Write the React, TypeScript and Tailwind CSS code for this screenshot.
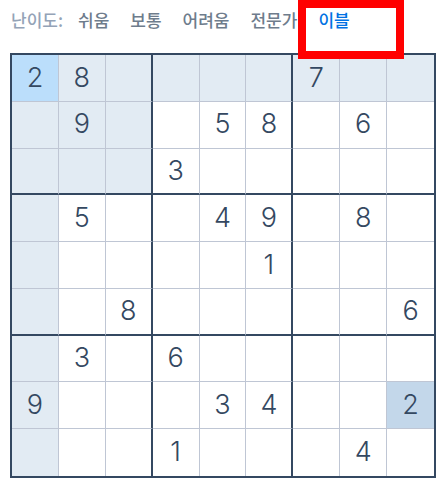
import { Fragment } from "react";

const puzzle: number[][] = [
  [2, 8, 0, 0, 0, 0, 7, 0, 0],
  [0, 9, 0, 0, 5, 8, 0, 6, 0],
  [0, 0, 0, 3, 0, 0, 0, 0, 0],
  [0, 5, 0, 0, 4, 9, 0, 8, 0],
  [0, 0, 0, 0, 0, 1, 0, 0, 0],
  [0, 0, 8, 0, 0, 0, 0, 0, 6],
  [0, 3, 0, 6, 0, 0, 0, 0, 0],
  [9, 0, 0, 0, 3, 4, 0, 0, 2],
  [0, 0, 0, 1, 0, 0, 0, 4, 0],
];

const levels = ["쉬움", "보통", "어려움", "전문가", "이블"];
const selected = { row: 0, col: 0 };

function cellBg(r: number, c: number) {
  if (r === selected.row && c === selected.col) return "bg-[#bbdefb]";
  const value = puzzle[selected.row][selected.col];
  if (value && puzzle[r][c] === value) return "bg-[#c3d7ea]";
  const sameBox =
    Math.floor(r / 3) === Math.floor(selected.row / 3) &&
    Math.floor(c / 3) === Math.floor(selected.col / 3);
  if (r === selected.row || c === selected.col || sameBox) return "bg-[#e2ebf3]";
  return "bg-white";
}

function borderClasses(r: number, c: number) {
  const right =
    c === 8 ? "" : c === 2 || c === 5 ? "border-r-2 border-r-[#344861]" : "border-r border-r-[#bfc6d4]";
  const bottom =
    r === 8 ? "" : r === 2 || r === 5 ? "border-b-2 border-b-[#344861]" : "border-b border-b-[#bfc6d4]";
  return `${right} ${bottom}`;
}

export default function App() {
  return (
    <div className="relative w-[445px] h-[485px] bg-white px-[10px] font-['Noto_Sans_CJK_KR','Noto_Sans',sans-serif]">
      <div className="flex h-[40px] items-center pl-[1px] text-[17px] font-medium">
        <span className="text-[#94a3b7]">난이도:</span>
        <div className="ml-[15px] flex gap-[21px]">
          {levels.map((level) => (
            <span
              key={level}
              className={level === "이블" ? "text-[#0072e3]" : "text-[#6e7c8c]"}
            >
              {level}
            </span>
          ))}
        </div>
      </div>

      <div className="mt-[13px] grid h-[425px] w-[426px] grid-cols-9 grid-rows-9 border-2 border-[#344861]">
        {puzzle.map((row, r) => (
          <Fragment key={r}>
            {row.map((value, c) => (
              <div
                key={c}
                className={`flex items-center justify-center ${cellBg(r, c)} ${borderClasses(r, c)} font-['Inter',sans-serif] text-[27px] font-light text-[#344861]`}
              >
                {value ? value : ""}
              </div>
            ))}
          </Fragment>
        ))}
      </div>

      {/* annotation box */}
      <div className="absolute left-[298px] top-0 h-[59px] w-[106px] border-8 border-[#ff0000]" />
    </div>
  );
}
